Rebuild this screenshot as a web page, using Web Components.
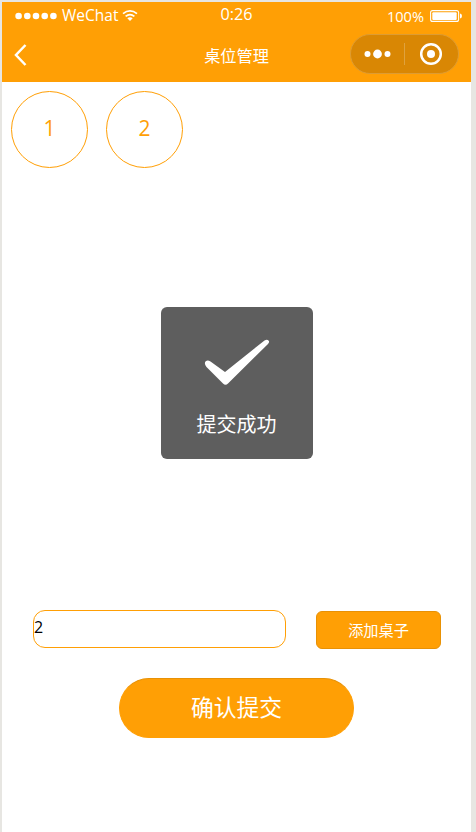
<!DOCTYPE html>
<html lang="zh-CN">
<head>
<meta charset="utf-8">
<title>桌位管理</title>
<style>
html,body{margin:0;height:100%;overflow:hidden}
body{background:#e7e6e2;font-family:"Open Sans","Noto Sans CJK SC",sans-serif}
</style>
</head>
<body>
<phone-screen>
  <status-bar slot="header" carrier="WeChat" time="0:26" battery="100%"></status-bar>
  <nav-bar slot="header">桌位管理</nav-bar>
  <table-list>
    <table-badge>1</table-badge>
    <table-badge>2</table-badge>
  </table-list>
  <table-form>
    <text-field>2</text-field>
    <action-button kind="small">添加桌子</action-button>
  </table-form>
  <action-button kind="large">确认提交</action-button>
  <success-toast slot="overlay">提交成功</success-toast>
</phone-screen>
<script>
function define(name, html) {
  const template = document.createElement('template');
  template.innerHTML = html;
  customElements.define(name, class extends HTMLElement {
    constructor() {
      super();
      this.attachShadow({ mode: 'open' }).append(template.content.cloneNode(true));
    }
    connectedCallback() {
      this.shadowRoot.querySelectorAll('[data-attr]').forEach(el => {
        el.textContent = this.getAttribute(el.dataset.attr);
      });
    }
  });
}

define('phone-screen', `
<style>
:host{display:block;box-sizing:border-box;height:832px;width:476px;padding:2px 5px 0 2px}
.screen{position:relative;height:830px;background:#fff;display:flex;flex-direction:column}
header{background:#ff9f05;height:80px;flex:none}
main{flex:1;display:flex;flex-direction:column;align-items:center}
.overlay{position:absolute;left:159px;top:305px}
</style>
<div class="screen"><header><slot name="header"></slot></header><main><slot></slot></main><div class="overlay"><slot name="overlay"></slot></div></div>`);

define('status-bar', `
<style>
:host{display:grid;grid-template-columns:1fr auto 1fr;height:27px;align-items:center;color:#fff;padding:0 9px 0 13px;box-sizing:border-box}
.left,.right{display:flex;align-items:center}
.right{justify-content:flex-end}
svg{display:block;flex:none}
.carrier{font-size:15.5px;line-height:20px;margin:0 4px 0 5px;position:relative;top:-1px}
.left svg:last-child{position:relative;top:-1px}
.time{font-size:16.2px;line-height:20px;position:relative;top:-2px;left:-2px}
.battery{font-size:14.6px;line-height:20px;margin-right:6px}
.right svg{position:relative;top:0}
</style>
<div class="left">
<svg width="42" height="8" viewBox="0 0 42 8" fill="#fff"><circle cx="3.6" cy="4" r="3.3"/><circle cx="12.3" cy="4" r="3.3"/><circle cx="21" cy="4" r="3.3"/><circle cx="29.7" cy="4" r="3.3"/><circle cx="38.4" cy="4" r="3.3"/></svg>
<span class="carrier" data-attr="carrier"></span>
<svg width="16" height="14" viewBox="0 0 16 14" fill="none" stroke="#fff" stroke-width="1.8"><path d="M1 5.6Q8 .2 15 5.6M3.6 8.4Q8 4.9 12.4 8.4"/><path d="M5.3 10.3Q8 8.2 10.7 10.3L8 13Z" fill="#fff" stroke="none"/></svg>
</div>
<span class="time" data-attr="time"></span>
<div class="right">
<span class="battery" data-attr="battery"></span>
<svg width="32" height="12" viewBox="0 0 32 12"><rect x=".6" y=".6" width="28" height="10.8" rx="2" fill="none" stroke="#fff" stroke-width="1.1"/><rect x="2.3" y="2.3" width="24.4" height="7.6" rx="1" fill="#fff"/><path d="M30 3.5Q32 3.7 32 6T30 8.5Z" fill="#fff"/></svg>
</div>`);

define('nav-bar', `
<style>
:host{display:grid;grid-template-columns:1fr auto 1fr;height:53px;align-items:center;color:#fff;padding:0 12px;box-sizing:border-box}
svg{display:block}
:host{--lift:-2px}
.back{position:relative;top:-.5px}
.title{font-size:16.2px;line-height:24px}
.capsule{justify-self:end;width:109px;height:40px;box-sizing:border-box;border:1px solid #dd9c33;border-radius:20px;background:#d98704;display:grid;grid-template-columns:53px 1px 53px;align-items:center;position:relative;top:var(--lift)}
.capsule svg{justify-self:center}
.capsule svg:last-child{position:relative;left:-1px}
.rule{height:22px;background:#dfa23e}
</style>
<svg class="back" width="14" height="22" viewBox="0 0 14 22" fill="none" stroke="#fff" stroke-width="2.5"><path d="M11.500 1 2 11 11.500 21"/></svg>
<span class="title"><slot></slot></span>
<div class="capsule">
<svg width="28" height="10" viewBox="0 0 28 10" fill="#fff"><circle cx="3.500" cy="5" r="3"/><circle cx="13.500" cy="5" r="4.400"/><circle cx="23.500" cy="5" r="3"/></svg>
<span class="rule"></span>
<svg width="24" height="24" viewBox="0 0 24 24"><circle cx="12" cy="12" r="9.800" fill="none" stroke="#fff" stroke-width="2.500"/><circle cx="12" cy="12" r="4" fill="#fff"/></svg>
</div>`);

define('table-list', `
<style>:host{display:flex;align-self:stretch;gap:18px;padding:9px;box-sizing:border-box;height:528px;align-items:flex-start}</style><slot></slot>`);

define('table-badge', `
<style>:host{display:grid;place-items:center;box-sizing:border-box;width:77px;height:77px;border:1px solid #ff9f05;border-radius:50%;color:#ff9f05;font-size:21px;line-height:28px;padding-bottom:3px}</style><span><slot></slot></span>`);

define('table-form', `
<style>:host{display:flex;align-self:stretch;justify-content:space-between;align-items:center;height:38px;padding:0 30px 0 31px;box-sizing:border-box}</style><slot></slot>`);

define('text-field', `
<style>:host{display:block;box-sizing:border-box;width:253px;height:38px;border:1px solid #ff9f05;border-radius:12px;color:#000;font-size:16px;line-height:33px;padding-left:0}</style><slot></slot>`);

define('action-button', `
<style>
:host{display:grid;place-items:center;box-sizing:border-box;flex:none;background:#ff9f05;border:1px solid #e89105;color:#fff}
:host([kind=small]){width:125px;height:38px;border-radius:6px;font-size:15.2px;line-height:22px;position:relative;top:1px}
:host([kind=large]){width:235px;height:60px;border-radius:30px;border-color:#e89105 #ff9f05 #ff9f05;margin-top:30px;font-size:22.8px;line-height:32px;padding-bottom:1px}
</style><span><slot></slot></span>`);

define('success-toast', `
<style>
:host{display:flex;flex-direction:column;align-items:center;box-sizing:border-box;width:152px;height:152px;border-radius:6px;background:#5e5e5e;color:#fff;padding-top:32px}
span{font-size:20px;line-height:28px;margin:24px 1px 0 0}
svg{display:block}
</style>
<svg width="66" height="48" viewBox="0 0 66 48" fill="#fff"><path d="M2 22Q4 21 6.500 22.500L21 33 60.500 1.400Q63 0 64.500 1.400T64 5L24 44.500Q21.500 47 19 44.500L2.500 28Q-.5 24 2 22Z"/></svg>
<span><slot></slot></span>`);
</script>
</body>
</html>
